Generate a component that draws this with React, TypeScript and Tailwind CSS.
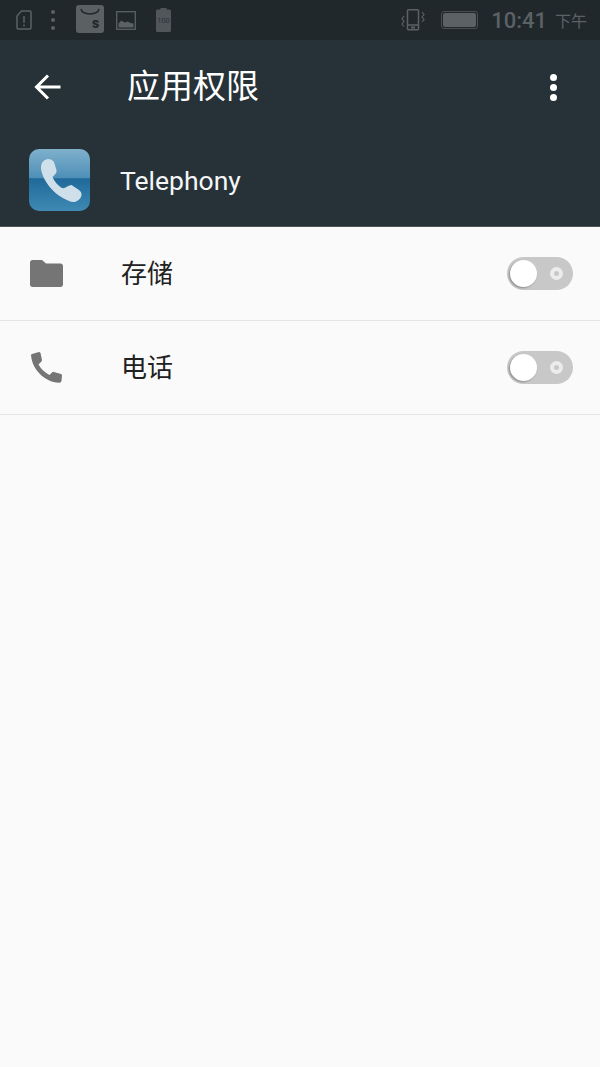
const cjk = "font-['Roboto','Noto_Sans_CJK_SC',sans-serif]";

function SimIcon() {
  return (
    <svg width="16" height="20" viewBox="0 0 16 20" fill="none">
      <path d="M5.500 1H14a1 1 0 0 1 1 1v16a1 1 0 0 1-1 1H2a1 1 0 0 1-1-1V6z" stroke="#5b6164" strokeWidth="1.500" strokeLinejoin="round" />
      <path d="M8 6v7M8 14.500v2" stroke="#5b6164" strokeWidth="1.500" />
    </svg>
  );
}

function DotsDim() {
  return (
    <div className="flex flex-col gap-[4px] items-center w-[4px]">
      <span className="w-[4px] h-[4px] rounded-full bg-[#5b6164]" />
      <span className="w-[4px] h-[4px] rounded-full bg-[#5b6164]" />
      <span className="w-[4px] h-[4px] rounded-full bg-[#5b6164]" />
    </div>
  );
}

function BagIcon() {
  return (
    <svg width="28" height="28" viewBox="0 0 28 28" className="-mt-[2px]">
      <rect width="28" height="28" rx="3" fill="#5b6063" />
      <path d="M5 4c1.500 6.500 16.500 6.500 18 0" fill="none" stroke="#20282c" strokeWidth="1.500" />
      <text x="16" y="23" fontSize="14" fontWeight="900" fill="#20282c" fontFamily="Roboto, sans-serif">s</text>
    </svg>
  );
}

function PictureIcon() {
  return (
    <svg width="20" height="19" viewBox="0 0 20 19" fill="none">
      <rect x="0.700" y="0.700" width="18.600" height="17.600" stroke="#5b6164" strokeWidth="1.300" />
      <path d="M2.500 16.500v-4l3-3 2 1.500 2 .5 2-1 3 1.500 3 .5v4z" fill="#5b6164" />
    </svg>
  );
}

function BatteryDim() {
  return (
    <svg width="15" height="24" viewBox="0 0 15 24">
      <rect x="4.500" y="0" width="6" height="2" fill="#50565a" />
      <rect x="0" y="1.500" width="15" height="22.500" rx="1.500" fill="#50565a" />
      <text x="7.500" y="15" textAnchor="middle" fontSize="7.500" fill="#2e3538" fontFamily="Roboto, sans-serif">100</text>
    </svg>
  );
}

function VibrateIcon() {
  return (
    <svg width="24" height="22" viewBox="0 0 24 22" fill="none" stroke="#5b6164" strokeWidth="1.500">
      <rect x="6.500" y="0.800" width="11" height="20" rx="1" />
      <path d="M6.500 16h11" />
      <rect x="10" y="17.500" width="4" height="2" fill="#5b6164" stroke="none" />
      <path d="M3 7L1 10l2 2.500L1 15l2 2.500M21 3l2 2.500L21 8l2 2.500L21 13" strokeWidth="1.200" />
    </svg>
  );
}

function AppIcon() {
  return (
    <div className="w-[61px] h-[62px] rounded-[10px] overflow-hidden bg-[linear-gradient(#7fb0cc_0%,#4f90b8_46%,#1f6a9a_48%,#3f89b4_100%)] flex items-center justify-center">
      <svg width="41" height="44" viewBox="0 0 41 44" fill="#cfe0ea" className="ml-[3px] mt-[1px]">
        <path d="M3 1.500Q5 0 7 0Q11 0 13 3L15.500 11Q16 14 13.500 16L11.500 18Q14 24 20 28.500Q22 30 24.500 28.500Q28 26 30.500 26L38 31Q41 33 40.500 36Q40 40 35 42.500Q32 44 27 41.500C13 36 2 22 0 10Q-.5 4 3 1.500z" />
      </svg>
    </div>
  );
}

function FolderIcon() {
  return (
    <svg width="33" height="27" viewBox="0 0 33 27" fill="#757575">
      <path d="M2.500 0h9.500l4 3.500h14.500c1.400 0 2.500 1.100 2.500 2.500v18.500c0 1.400-1.100 2.500-2.500 2.500h-28C1.100 27 0 25.900 0 24.500v-22C0 1.100 1.100 0 2.500 0z" />
    </svg>
  );
}

function PhoneIcon() {
  return (
    <svg width="31" height="31" viewBox="0 0 31 31" fill="#757575" className="ml-px">
      <path d="M1 2L8 0Q9 0 9.500 1L11 8Q11 9 10 10L7.500 12.500Q11 19 18.500 23L21 20.500Q22 19.500 23 20L30 22Q31 22.500 31 23.500L30.500 29Q30 31 28 30.800C13 30 1 17 0 3Q0 2.300 1 2z" />
    </svg>
  );
}

function Toggle() {
  return (
    <div className="flex items-center w-[66px] h-[33px] rounded-full bg-[#c8c8c8] pl-[3px] pr-[10px] justify-between">
      <span className="w-[27px] h-[27px] rounded-full bg-white shadow-[-1px_1px_2px_rgba(0,0,0,0.3)]" />
      <span className="w-[13px] h-[13px] rounded-full border-[4px] border-[#ececec]" />
    </div>
  );
}

function PermissionRow({ icon, label }: { icon: React.ReactNode; label: string }) {
  return (
    <div className="flex items-center h-[94px] border-b border-[#e4e4e4] pl-[30px] pr-[27px]">
      <div className="w-[91px] flex items-center">{icon}</div>
      <span className="flex-1 mt-[2px] text-[26px] text-[#212121]">{label}</span>
      <Toggle />
    </div>
  );
}

export default function App() {
  return (
    <div className={`w-[600px] h-[1067px] bg-[#fafafa] flex flex-col overflow-hidden ${cjk}`}>
      {/* Status bar */}
      <div className="h-[40px] bg-[#20282c] flex items-center pl-[16px] pr-[13px]">
        <div className="flex items-center">
          <SimIcon />
          <div className="ml-[19px]"><DotsDim /></div>
          <div className="ml-[21px]"><BagIcon /></div>
          <div className="ml-[12px]"><PictureIcon /></div>
          <div className="ml-[20px]"><BatteryDim /></div>
        </div>
        <div className="ml-auto flex items-center text-[#5b6164]">
          <VibrateIcon />
          <div className="ml-[16px] w-[37px] h-[18px] rounded-[3px] border border-[#484e51] p-px">
            <div className="w-full h-full bg-[#5b6164] rounded-[2px]" />
          </div>
          <span className="ml-[13px] text-[22px] font-medium">10:41</span>
          <span className="ml-[8px] text-[16px] mt-[3px]">下午</span>
        </div>
      </div>

      {/* Header */}
      <div className="h-[187px] bg-[#263238] border-b border-[#4a5459]">
        <div className="flex items-center h-[94px] pl-[33px] pr-[43px]">
          <svg width="28" height="28" viewBox="0 0 28 28" fill="none" stroke="white" strokeWidth="3">
            <path d="M27.500 14H3M15 2.500L3.500 14L15 25.500" />
          </svg>
          <h1 className="ml-[66px] text-[33px] text-white font-normal">应用权限</h1>
          <div className="ml-auto flex flex-col gap-[3px]">
            <span className="w-[7px] h-[7px] rounded-full bg-white" />
            <span className="w-[7px] h-[7px] rounded-full bg-white" />
            <span className="w-[7px] h-[7px] rounded-full bg-white" />
          </div>
        </div>
        <div className="flex items-center pl-[29px] mt-[15px]">
          <AppIcon />
          <span className="ml-[30px] mt-[2px] text-[26.500px] text-[#f4f6f7]">Telephony</span>
        </div>
      </div>

      {/* Permission list */}
      <PermissionRow icon={<FolderIcon />} label="存储" />
      <PermissionRow icon={<PhoneIcon />} label="电话" />
    </div>
  );
}
